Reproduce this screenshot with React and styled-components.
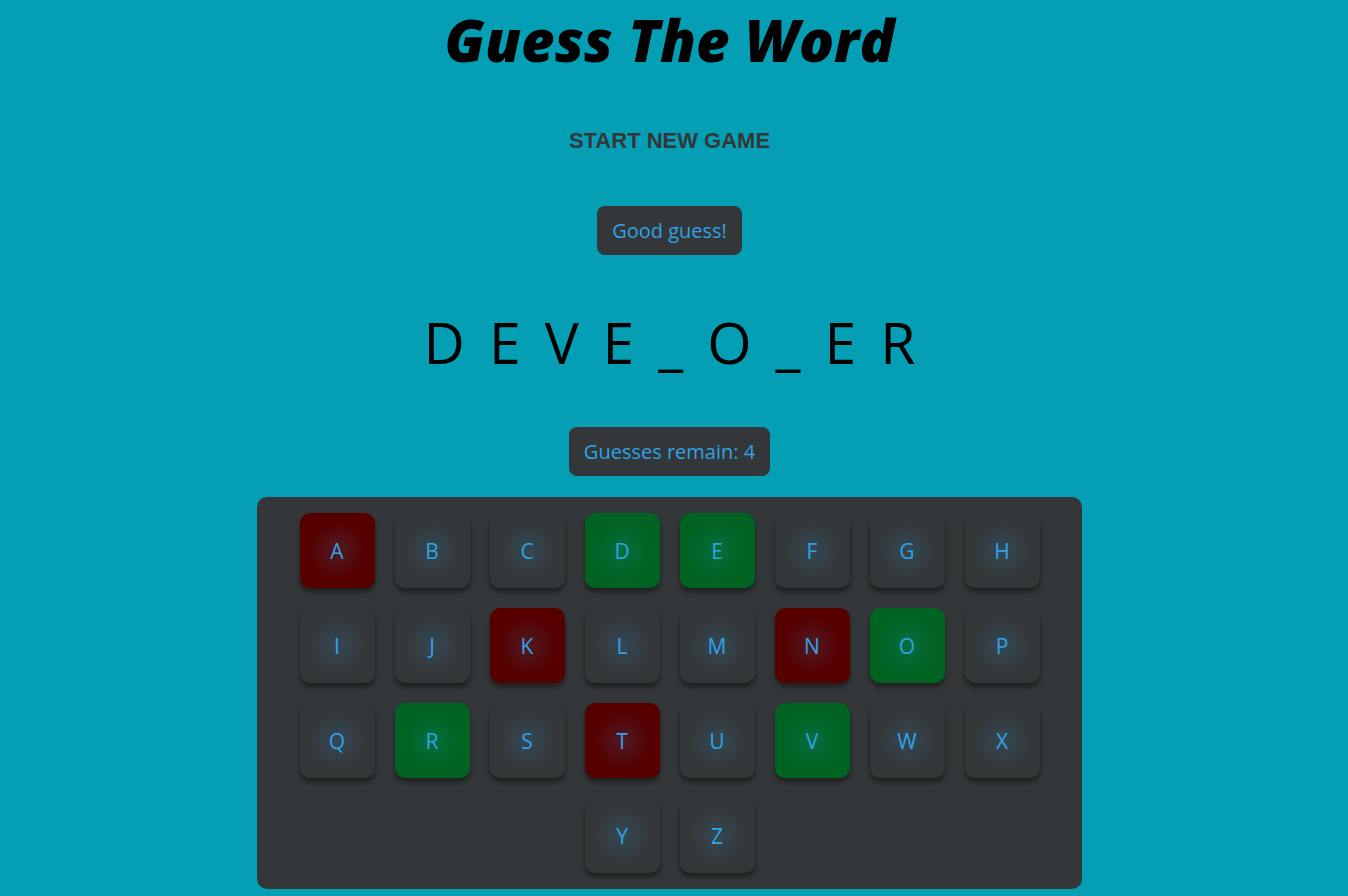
import React from 'react';
import styled, { createGlobalStyle } from 'styled-components';

const GlobalStyle = createGlobalStyle`
  body {
    margin: 0;
    background-color: #059fb5;
    font-family: 'Open Sans', sans-serif;
  }
`;

const Page = styled.div`
  display: flex;
  flex-direction: column;
  align-items: center;
  min-height: 896px;
  padding-right: 9px;
`;

const Title = styled.h1`
  margin: 4px 0 0;
  font-family: 'Open Sans', sans-serif;
  font-style: italic;
  font-weight: 800;
  font-size: 58px;
  line-height: 72px;
  color: #000;
`;

const NewGameButton = styled.button`
  margin-top: 51px;
  background: none;
  border: none;
  font-family: 'Liberation Sans', Arial, sans-serif;
  font-weight: 700;
  font-size: 22px;
  color: #333739;
  cursor: pointer;
`;

const Badge = styled.div`
  margin-top: ${(p) => p.$top}px;
  background: #343739;
  color: #2fa3e6;
  border-radius: 8px;
  padding: 0 15px;
  height: 49px;
  display: flex;
  align-items: center;
  font-family: 'Open Sans', sans-serif;
  font-size: 20px;
`;

const Word = styled.div`
  margin-top: 52px;
  font-family: 'Open Sans', sans-serif;
  font-weight: 400;
  font-size: 57px;
  line-height: 70px;
  letter-spacing: 24px;
  color: #000;
  padding-left: 24px;
`;

const Keyboard = styled.div`
  margin-top: 21px;
  width: 825px;
  box-sizing: border-box;
  padding: 16px 42px;
  background: #343739;
  border-radius: 10px;
  display: flex;
  flex-wrap: wrap;
  justify-content: center;
  gap: 20px;
`;

const keyColors = {
  idle: '#343739',
  wrong: '#560000',
  right: '#006321',
};

const Key = styled.button`
  width: 75px;
  height: 75px;
  border: none;
  border-radius: 10px;
  background:
    radial-gradient(circle at center, rgba(47, 163, 230, 0.16) 0%, rgba(47, 163, 230, 0) 55%),
    ${(p) => keyColors[p.$state]};
  box-shadow: 0 4px 5px rgba(0, 0, 0, 0.45);
  color: #2fa3e6;
  font-family: 'Open Sans', sans-serif;
  font-size: 21px;
  cursor: pointer;
`;

const wrong = ['A', 'K', 'N', 'T'];
const right = ['D', 'E', 'O', 'R', 'V'];
const letters = 'ABCDEFGHIJKLMNOPQRSTUVWXYZ'.split('');

export default function App() {
  return (
    <Page>
      <GlobalStyle />
      <Title>Guess The Word</Title>
      <NewGameButton>START NEW GAME</NewGameButton>
      <Badge $top={51}>Good guess!</Badge>
      <Word>DEVE_O_ER</Word>
      <Badge $top={50}>Guesses remain: 4</Badge>
      <Keyboard>
        {letters.map((l) => (
          <Key key={l} $state={wrong.includes(l) ? 'wrong' : right.includes(l) ? 'right' : 'idle'}>
            {l}
          </Key>
        ))}
      </Keyboard>
    </Page>
  );
}
